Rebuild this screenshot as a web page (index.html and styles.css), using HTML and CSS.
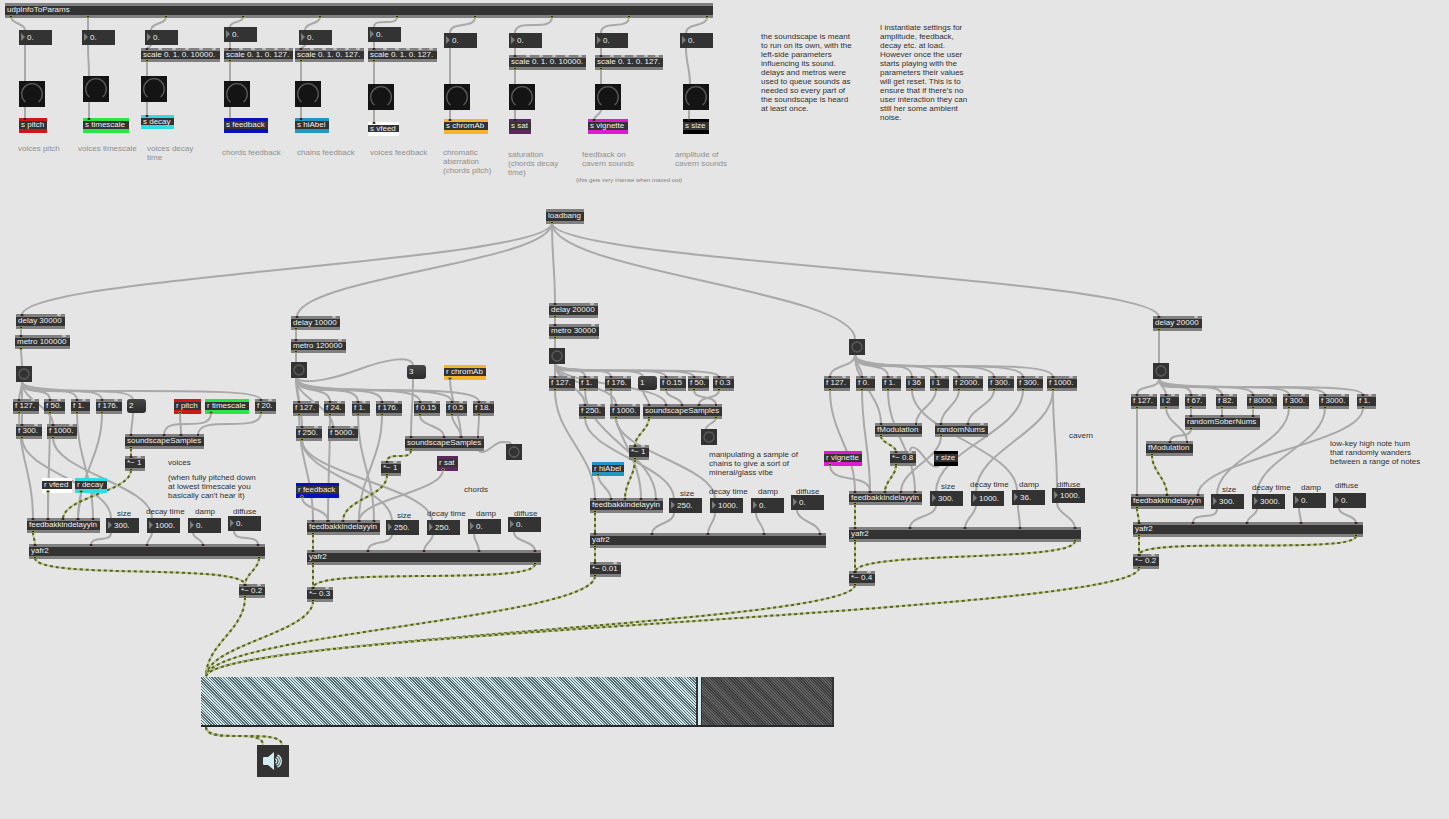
FILE: index.html
```html
<!DOCTYPE html>
<html lang="en">
<head>
<meta charset="utf-8">
<meta name="viewport" content="width=device-width, initial-scale=1">
<title>Soundscape patch</title>
<link rel="stylesheet" href="styles.css">
</head>
<body>
<main class="patch" id="patch">
  <svg class="cords" id="cords" aria-hidden="true"></svg>
</main>
<script src="patch.js"></script>
</body>
</html>
```
FILE: styles.css
```css
* { box-sizing: border-box; }

body {
  margin: 0;
  background: #e5e5e5;
  color: #303030;
  font: 8px/9px "Liberation Sans", Arial, sans-serif;
}

.patch {
  position: relative;
  min-height: 100vh;
  overflow: hidden;
}

.cords, .pegs {
  position: absolute;
  inset: 0;
  width: 100%;
  height: 100%;
  pointer-events: none;
}

.cord { fill: none; stroke: #a9a9a9; stroke-width: 2; }
.signal { fill: none; stroke: #bdc98a; stroke-width: 2; }
.signal-dash { fill: none; stroke: #566326; stroke-width: 2; stroke-dasharray: 3 3; }
.outlet { fill: #262612; stroke: #a0a24c; stroke-width: 1; }
.inlet { fill: #3a2222; }
.bump { fill: #c4c4c4; }

.node {
  position: absolute;
  margin: 0;
  padding: 0;
  border: 0;
  border-radius: 0;
  font: inherit;
  white-space: pre;
}

.object {
  padding-left: 2px;
  background: #333;
  color: #f0f0f0;
  border-top: 3px solid #808080;
  border-bottom: 3px solid #808080;
  line-height: 7px;
}

.colored { border-bottom-width: 4px; }
.red { border-color: #cd1818; }
.green { border-color: #2ae546; }
.cyan { border-color: #30dbe2; }
.blue { border-color: #0911bb; }
.teal { border-color: #2196c3; }
.white { border-color: #fff; }
.amber { border-color: #f5b42c; }
.plum { border-color: #60265f; }
.magenta { border-color: #dd1cd0; }
.black { border-color: #000; }

.number { background: #333; }

.number-field {
  display: block;
  width: 100%;
  height: 100%;
  margin: 0;
  padding: 0 0 1px 8px;
  border: 0;
  background: transparent;
  color: #f0f0f0;
  font: inherit;
}

.number::before {
  content: "";
  position: absolute;
  left: 2px;
  top: 3px;
  border: 4px solid transparent;
  border-left-color: #7c7c7c;
  border-right: 0;
}

.message {
  padding: 0 0 2px 2px;
  border-radius: 3px;
  background: linear-gradient(#464646, #2b2b2b);
  color: #f0f0f0;
  text-align: left;
}

.bang { background: #333; }
.dial { background: #141414; }
.dac { background: #333; }
.icon { display: block; width: 100%; height: 100%; }
.ring { fill: none; stroke: #5c5c5c; }
.speaker { fill: #d2ecf1; }
.wave { fill: none; stroke: #d2ecf1; stroke-width: 1.4; }

.muted { color: #8f8f8f; }
.tiny { font-size: 6px; color: #808080; }

.gain {
  appearance: none;
  outline: 0;
  border-bottom: 2px solid #252a2d;
  background:
    linear-gradient(#333, #333) right / 2px 100% no-repeat,
    repeating-linear-gradient(45deg, #626262 0 1px, #3c3c3c 1px 2px) right / 21% 100% no-repeat,
    repeating-linear-gradient(45deg, #d0e7ea 0 1px, #566a71 1px 2px);
}

.gain::-webkit-slider-thumb {
  appearance: none;
  width: 6px;
  height: 48px;
  border: solid #333;
  border-width: 0 1px 0 2px;
  background: #d2ecf1;
}
```
FILE: patch.js
```js
const NS = "http://www.w3.org/2000/svg";
const patch = document.getElementById("patch");
const cordLayer = document.getElementById("cords");

// Objects: text, x, y, width, height, colour
const objects = [
  ["udpInfoToParams", 5, 3, 708, 15],
  ["scale 0. 1. 0. 10000.", 141, 48, 79, 14], ["scale 0. 1. 0. 127.", 224, 48, 69, 14],
  ["scale 0. 1. 0. 127.", 295, 48, 69, 14], ["scale 0. 1. 0. 127.", 368, 48, 69, 14],
  ["scale 0. 1. 0. 10000.", 509, 55, 77, 15], ["scale 0. 1. 0. 127.", 595, 55, 68, 15],
  ["s pitch", 19, 118, 28, 15, "red"], ["s timescale", 83, 118, 46, 15, "green"],
  ["s decay", 141, 115, 33, 14, "cyan"], ["s feedback", 224, 118, 44, 15, "blue"],
  ["s hiAbel", 295, 118, 34, 15, "teal"], ["s vfeed", 368, 122, 31, 14, "white"],
  ["s chromAb", 444, 119, 44, 15, "amber"], ["s sat", 509, 119, 22, 15, "plum"],
  ["s vignette", 588, 119, 40, 15, "magenta"], ["s size", 683, 119, 26, 15, "black"],
  ["loadbang", 546, 209, 38, 15],

  ["delay 30000", 16, 314, 49, 15], ["metro 100000", 15, 335, 55, 14],
  ["f 127.", 13, 399, 26, 15], ["f 50.", 44, 399, 21, 15], ["f 1.", 71, 399, 19, 15],
  ["f 176.", 96, 399, 26, 15], ["r pitch", 174, 399, 27, 15, "red"],
  ["r timescale", 205, 399, 44, 15, "green"], ["f 20.", 255, 399, 21, 15],
  ["f 300.", 16, 424, 26, 15], ["f 1000.", 47, 424, 30, 15],
  ["soundscapeSamples", 125, 434, 79, 15], ["*~ 1", 125, 456, 20, 15],
  ["r vfeed", 42, 478, 30, 15, "white"], ["r decay", 75, 478, 32, 15, "cyan"],
  ["feedbakkindelayyin", 27, 518, 73, 15], ["yafr2", 29, 544, 236, 15], ["*~ 0.2", 239, 584, 26, 14],

  ["delay 10000", 291, 316, 49, 14], ["metro 120000", 291, 339, 55, 14],
  ["r chromAb", 444, 365, 42, 15, "amber"],
  ["f 127.", 293, 401, 26, 15], ["f 24.", 324, 401, 21, 15], ["f 1.", 352, 401, 18, 15],
  ["f 176.", 376, 401, 26, 15], ["f 0.15", 414, 401, 26, 15], ["f 0.5", 446, 401, 21, 15],
  ["f 18.", 473, 401, 21, 15], ["f 250.", 296, 426, 26, 15], ["f 5000.", 328, 426, 30, 15],
  ["soundscapeSamples", 405, 436, 79, 15], ["*~ 1", 381, 461, 20, 15],
  ["r sat", 437, 456, 21, 15, "plum"], ["r feedback", 296, 483, 43, 15, "blue"],
  ["feedbakkindelayyin", 307, 520, 73, 15], ["yafr2", 307, 550, 234, 15], ["*~ 0.3", 307, 587, 26, 15],

  ["delay 20000", 549, 303, 49, 15], ["metro 30000", 549, 324, 50, 15],
  ["f 127.", 549, 376, 26, 15], ["f 1.", 579, 376, 19, 15], ["f 176.", 605, 376, 26, 15],
  ["f 0.15", 660, 376, 26, 15], ["f 50.", 688, 376, 21, 15], ["f 0.3", 713, 376, 21, 15],
  ["f 250.", 579, 404, 26, 15], ["f 1000.", 610, 404, 30, 15],
  ["soundscapeSamples", 643, 404, 79, 15], ["*~ 1", 629, 445, 20, 15],
  ["r hiAbel", 592, 462, 32, 14, "teal"],
  ["feedbakkindelayyin", 590, 498, 73, 15], ["yafr2", 590, 533, 236, 15], ["*~ 0.01", 590, 562, 31, 15],

  ["f 127.", 824, 376, 26, 15], ["f 0.", 856, 376, 19, 15], ["f 1.", 882, 376, 19, 15],
  ["i 36", 906, 376, 19, 15], ["i 1", 930, 376, 19, 15], ["f 2000.", 953, 376, 30, 15],
  ["f 300.", 988, 376, 26, 15], ["f 300.", 1017, 376, 26, 15], ["f 1000.", 1047, 376, 30, 15],
  ["fModulation", 875, 423, 47, 14], ["randomNums", 935, 423, 53, 14],
  ["r vignette", 824, 451, 38, 15, "magenta"], ["*~ 0.8", 890, 451, 26, 15],
  ["r size", 934, 451, 24, 15, "black"],
  ["feedbakkindelayyin", 849, 491, 73, 14], ["yafr2", 849, 527, 232, 15], ["*~ 0.4", 849, 571, 26, 15],

  ["delay 20000", 1153, 316, 49, 15],
  ["f 127.", 1131, 394, 26, 15], ["i 2", 1160, 394, 19, 15], ["f 67.", 1185, 394, 21, 15],
  ["f 82.", 1216, 394, 21, 15], ["f 8000.", 1247, 394, 30, 15], ["f 300.", 1283, 394, 26, 15],
  ["f 3000.", 1319, 394, 30, 15], ["f 1.", 1357, 394, 19, 15],
  ["randomSoberNums", 1185, 415, 75, 15], ["fModulation", 1146, 441, 47, 15],
  ["feedbakkindelayyin", 1131, 494, 73, 15], ["yafr2", 1133, 522, 230, 15], ["*~ 0.2", 1133, 554, 26, 15]
];

// Number boxes: value, x, y, then an optional label with its own x, y
const numbers = [
  ["0.", 19, 30], ["0.", 82, 30], ["0.", 145, 30], ["0.", 224, 27], ["0.", 299, 30],
  ["0.", 368, 27], ["0.", 444, 33], ["0.", 509, 33], ["0.", 595, 33], ["0.", 680, 33],
  ["300.", 106, 518, "size", 117, 509], ["1000.", 147, 518, "decay time", 146, 507],
  ["0.", 188, 518, "damp", 195, 507], ["0.", 228, 516, "diffuse", 233, 507],
  ["250.", 386, 520, "size", 397, 511], ["250.", 427, 520, "decay time", 427, 509],
  ["0.", 468, 519, "damp", 476, 509], ["0.", 508, 517, "diffuse", 514, 509],
  ["250.", 669, 498, "size", 680, 489], ["1000.", 710, 498, "decay time", 709, 487],
  ["0.", 751, 498, "damp", 758, 487], ["0.", 791, 495, "diffuse", 796, 487],
  ["300.", 930, 491, "size", 941, 482], ["1000.", 971, 491, "decay time", 970, 480],
  ["36.", 1012, 490, "damp", 1019, 480], ["1000.", 1052, 488, "diffuse", 1057, 480],
  ["300.", 1211, 494, "size", 1222, 485], ["3000.", 1252, 494, "decay time", 1252, 483],
  ["0.", 1293, 493, "damp", 1301, 483], ["0.", 1333, 493, "diffuse", 1335, 481]
];

const dials = [[19, 81], [83, 76], [141, 76], [224, 81], [295, 81], [368, 84], [444, 84], [509, 84], [595, 84], [683, 84]];
const bangs = [[16, 366], [291, 362], [506, 444], [549, 348], [701, 429], [849, 339], [1153, 363]];
const messages = [["2", 127, 399], ["3", 407, 365], ["1", 638, 376]];

const comments = [
  ["voices pitch", 18, 144, "muted"], ["voices timescale", 78, 144, "muted"],
  ["voices decay\ntime", 147, 144, "muted"], ["chords feedback", 222, 148, "muted"],
  ["chains feedback", 297, 148, "muted"], ["voices feedback", 370, 148, "muted"],
  ["chromatic\naberration\n(chords pitch)", 443, 148, "muted"],
  ["saturation\n(chords decay\ntime)", 508, 150, "muted"],
  ["feedback on\ncavern sounds", 582, 150, "muted"], ["amplitude of\ncavern sounds", 675, 150, "muted"],
  ["(this gets very intense when maxed out)", 576, 176, "tiny"],
  ["the soundscape is meant\nto run on its own, with the\nleft-side parameters\ninfluencing its sound.\ndelays and metros were\nused to queue sounds as\nneeded so every part of\nthe soundscape is heard\nat least once.", 761, 32],
  ["I instantiate settings for\namplitude, feedback,\ndecay etc. at load.\nHowever once the user\nstarts playing with the\nparameters their values\nwill get reset. This is to\nensure that if there's no\nuser interaction they can\nstill her some ambient\nnoise.", 880, 23],
  ["voices", 168, 458], ["(when fully pitched down\nat lowest timescale you\nbasically can't hear it)", 168, 473],
  ["chords", 464, 485], ["manipulating a sample of\nchains to give a sort of\nmineral/glass vibe", 709, 450],
  ["cavern", 1069, 431], ["low-key high note hum\nthat randomly wanders\nbetween a range of notes", 1330, 439]
];

// Control cords: x1, y1, x2, y2
const cords = [
  [11, 17, 25, 30], [88, 17, 88, 30], [166, 17, 151, 30], [243, 17, 230, 27], [320, 17, 305, 30],
  [397, 17, 374, 27], [475, 17, 450, 33], [552, 17, 515, 33], [629, 17, 601, 33], [707, 17, 686, 33],
  [25, 45, 25, 81], [88, 45, 89, 76], [151, 45, 147, 49], [230, 42, 230, 49], [305, 45, 301, 49],
  [374, 42, 374, 49], [450, 48, 450, 84], [515, 48, 515, 56], [601, 48, 601, 56], [686, 48, 690, 84],
  [147, 61, 147, 76], [230, 61, 230, 81], [301, 61, 301, 81], [374, 61, 374, 84], [515, 69, 515, 84], [601, 69, 601, 84],
  [25, 107, 25, 119], [89, 102, 89, 119], [147, 102, 147, 116], [230, 107, 230, 119], [301, 107, 301, 119],
  [374, 110, 374, 123], [450, 110, 450, 120], [515, 110, 515, 120], [601, 110, 594, 120], [689, 110, 689, 120],

  [552, 223, 22, 315], [552, 223, 297, 317], [552, 223, 555, 304], [552, 223, 855, 339], [552, 223, 1159, 317],

  [21, 328, 21, 336], [21, 349, 22, 366],
  [22, 382, 19, 400], [22, 382, 50, 400], [22, 382, 77, 400], [22, 382, 102, 400], [22, 382, 133, 400],
  [22, 382, 261, 400], [22, 382, 22, 425], [22, 382, 53, 425],
  [19, 413, 33, 519], [50, 413, 48, 519], [77, 413, 93, 519], [102, 413, 78, 519],
  [22, 438, 111, 518], [53, 438, 152, 518], [48, 492, 48, 519], [81, 492, 78, 519],
  [133, 413, 131, 435], [180, 413, 181, 435], [211, 413, 164, 435], [261, 413, 198, 435],
  [111, 533, 91, 545], [152, 533, 147, 545], [193, 533, 203, 545], [234, 531, 258, 545],

  [296, 329, 296, 340], [296, 352, 296, 362],
  [296, 378, 299, 402], [296, 378, 330, 402], [296, 378, 358, 402], [296, 378, 382, 402], [296, 378, 420, 402],
  [296, 378, 452, 402], [296, 378, 479, 402], [296, 378, 302, 427], [296, 378, 333, 427],
  [413, 379, 411, 437], [450, 379, 461, 437], [420, 415, 444, 437], [452, 415, 461, 437], [479, 415, 478, 437],
  [443, 470, 359, 521], [302, 497, 328, 521], [299, 415, 313, 521], [330, 415, 328, 521],
  [358, 415, 374, 521], [382, 415, 359, 521], [302, 440, 392, 521], [302, 440, 432, 521],
  [392, 534, 368, 551], [433, 534, 424, 551], [474, 534, 479, 551], [514, 532, 535, 551],

  [555, 317, 555, 325], [555, 338, 555, 348],
  [555, 364, 555, 377], [555, 364, 585, 377], [555, 364, 611, 377], [555, 364, 643, 377], [555, 364, 666, 377],
  [555, 364, 694, 377], [555, 364, 719, 377], [555, 364, 585, 405], [555, 364, 616, 405], [555, 364, 666, 405],
  [643, 390, 649, 405], [666, 390, 682, 405], [694, 390, 716, 405], [719, 390, 699, 405],
  [555, 390, 595, 499], [585, 390, 656, 499], [611, 390, 641, 499], [585, 418, 674, 499], [616, 418, 715, 499],
  [598, 475, 611, 499], [716, 418, 706, 429],
  [674, 513, 652, 534], [715, 513, 708, 534], [756, 513, 764, 534], [797, 510, 820, 534],

  [855, 355, 830, 377], [855, 355, 862, 377], [855, 355, 888, 377], [855, 355, 912, 377], [855, 355, 936, 377],
  [855, 355, 959, 377], [855, 355, 994, 377], [855, 355, 1023, 377], [855, 355, 1053, 377], [855, 355, 881, 424],
  [830, 390, 855, 492], [862, 390, 870, 492], [888, 390, 915, 492], [912, 390, 1017, 491],
  [936, 390, 916, 424], [959, 390, 941, 424], [994, 390, 968, 424], [1023, 390, 936, 492],
  [1053, 390, 976, 492], [1053, 390, 1057, 489], [941, 436, 901, 492], [830, 465, 870, 492],
  [936, 505, 910, 528], [976, 505, 965, 528], [1018, 505, 1020, 528], [1057, 503, 1075, 528],

  [1159, 330, 1159, 363],
  [1159, 379, 1137, 395], [1159, 379, 1166, 395], [1159, 379, 1191, 395], [1159, 379, 1222, 395],
  [1159, 379, 1253, 395], [1159, 379, 1289, 395], [1159, 379, 1325, 395], [1159, 379, 1363, 395],
  [1137, 408, 1137, 495], [1166, 408, 1187, 442], [1191, 408, 1191, 416], [1222, 408, 1222, 416],
  [1253, 408, 1253, 416], [1191, 429, 1170, 442], [1289, 408, 1217, 495], [1325, 408, 1257, 495],
  [1363, 408, 1198, 495],
  [1217, 509, 1193, 523], [1257, 509, 1247, 523], [1299, 508, 1301, 523], [1339, 508, 1356, 523]
];

// Cords that climb back to a higher inlet
const risingCords = [
  "M296 378 C304 386 336 378 360 369 C384 360 413 354 413 366",
  "M478 450 C484 458 494 442 502 442 S511 442 511 446",
  "M940 465 C932 472 924 455 918 450 S910 448 910 452"
];

const signals = [
  [131, 448, 131, 457], [131, 470, 63, 519], [33, 532, 35, 545], [35, 558, 245, 585], [259, 558, 245, 585], [245, 597, 206, 677],
  [411, 450, 387, 462], [387, 475, 343, 521], [313, 534, 313, 551], [313, 564, 313, 588], [535, 564, 313, 588], [313, 601, 206, 677],
  [649, 418, 635, 446], [635, 459, 625, 499], [595, 512, 595, 534], [595, 547, 595, 563], [595, 576, 206, 677],
  [881, 436, 896, 452], [896, 465, 885, 492], [855, 504, 855, 528], [855, 541, 855, 572], [1075, 541, 855, 572], [855, 585, 206, 677],
  [1152, 455, 1167, 495], [1137, 508, 1139, 523], [1139, 536, 1139, 555], [1356, 536, 1139, 555], [1139, 568, 206, 677],
  [206, 727, 263, 745], [206, 727, 282, 745]
];

function svg(tag, attrs, parent) {
  const el = document.createElementNS(NS, tag);
  for (const key in attrs) el.setAttribute(key, attrs[key]);
  parent.append(el);
  return el;
}

function node(tag, className, x, y, w, h) {
  const el = document.createElement(tag);
  el.className = "node " + className;
  el.style.left = x + "px";
  el.style.top = y + "px";
  if (w) el.style.width = w + "px";
  if (h) el.style.height = h + "px";
  patch.append(el);
  return el;
}

// Short, wide cords run level between their two bends
function curve([x1, y1, x2, y2]) {
  const dx = Math.abs(x2 - x1);
  const dy = y2 - y1;
  const pull = Math.max(dy * 0.42, Math.min(dy, 22, dx / 2));
  return `M${x1} ${y1} C${x1} ${y1 + pull} ${x2} ${y2 - pull} ${x2} ${y2}`;
}

cords.map(curve).concat(risingCords).forEach(d => svg("path", { class: "cord", d }, cordLayer));
signals.map(curve).forEach(d => {
  svg("path", { class: "signal", d }, cordLayer);
  svg("path", { class: "signal-dash", d }, cordLayer);
});

objects.forEach(([text, x, y, w, h, colour]) => {
  node("div", colour ? "object colored " + colour : "object", x, y, w, h).textContent = text;
});

numbers.forEach(([value, x, y, text, lx, ly], i) => {
  const box = node("div", "number", x, y, 33, 15);
  const input = document.createElement("input");
  input.className = "number-field";
  input.id = "number-" + i;
  input.value = value;
  box.append(input);
  if (text) {
    const label = node("label", "label", lx, ly);
    label.htmlFor = input.id;
    label.textContent = text;
  } else {
    input.setAttribute("aria-label", "Parameter " + (i + 1));
  }
});

messages.forEach(([text, x, y]) => { node("button", "message", x, y, 19, 14).textContent = text; });

bangs.forEach(([x, y]) => {
  const b = node("button", "bang", x, y, 16, 16);
  b.setAttribute("aria-label", "Bang");
  const icon = svg("svg", { class: "icon", viewBox: "0 0 16 16" }, b);
  svg("circle", { class: "ring", cx: 8, cy: 8, r: 5, "stroke-width": 1.3 }, icon);
});

dials.forEach(([x, y]) => {
  const icon = svg("svg", { class: "icon", viewBox: "0 0 26 26" }, node("div", "dial", x, y, 26, 26));
  svg("path", { class: "ring", d: "M6.5 21 A10.3 10.3 0 1 1 19.5 21", "stroke-width": 1.3 }, icon);
});

comments.forEach(([text, x, y, tone]) => { node("p", "comment " + (tone || ""), x, y).textContent = text; });

const gain = node("input", "gain", 201, 677, 633, 50);
gain.type = "range";
gain.max = 1000;
gain.value = 790;
gain.setAttribute("aria-label", "Gain");

const dac = node("button", "dac", 257, 745, 32, 32);
dac.setAttribute("aria-label", "Audio on");
const dacIcon = svg("svg", { class: "icon", viewBox: "0 0 32 32" }, dac);
svg("path", { class: "speaker", d: "M6 13 Q6 12 7 12 H11 L17 7 V25 L11 20 H7 Q6 20 6 19 Z" }, dacIcon);
svg("path", { class: "wave", d: "M18.5 14 A2.2 2.2 0 0 1 18.5 18 M19.5 11.8 A4.6 4.6 0 0 1 19.5 20.2 M20.5 9.8 A7 7 0 0 1 20.5 22.2" }, dacIcon);

// Pegs sit on the object borders, above the boxes
const pegLayer = svg("svg", { class: "pegs", "aria-hidden": "true" }, patch);
const onObject = (px, py) => objects.some(([, x, y, w, h]) => px >= x && px <= x + w && py >= y && py <= y + h);

objects.forEach(([text, x, y, w]) => {
  if (/^(f |i |delay|metro|\*~|randomN|fMod|sounds)/.test(text)) {
    svg("rect", { class: "bump", x: x + w - 8, y, width: 4, height: 2, rx: 1 }, pegLayer);
  }
  if (text.startsWith("scale")) {
    for (let i = 1; i < 6; i++) {
      svg("rect", { class: "bump", x: Math.round(x + 4 + i * (w - 12) / 5), y, width: 4, height: 2, rx: 1 }, pegLayer);
    }
  }
});

cords.concat(signals).forEach(([x1, y1, x2, y2]) => {
  if (onObject(x1, y1)) svg("rect", { class: "outlet", x: x1 - 1.5, y: y1 - 1.5, width: 3, height: 2, rx: 1 }, pegLayer);
  if (onObject(x2, y2)) svg("rect", { class: "inlet", x: x2 - 1.5, y: y2 - 1, width: 3, height: 2, rx: 1 }, pegLayer);
});
```
